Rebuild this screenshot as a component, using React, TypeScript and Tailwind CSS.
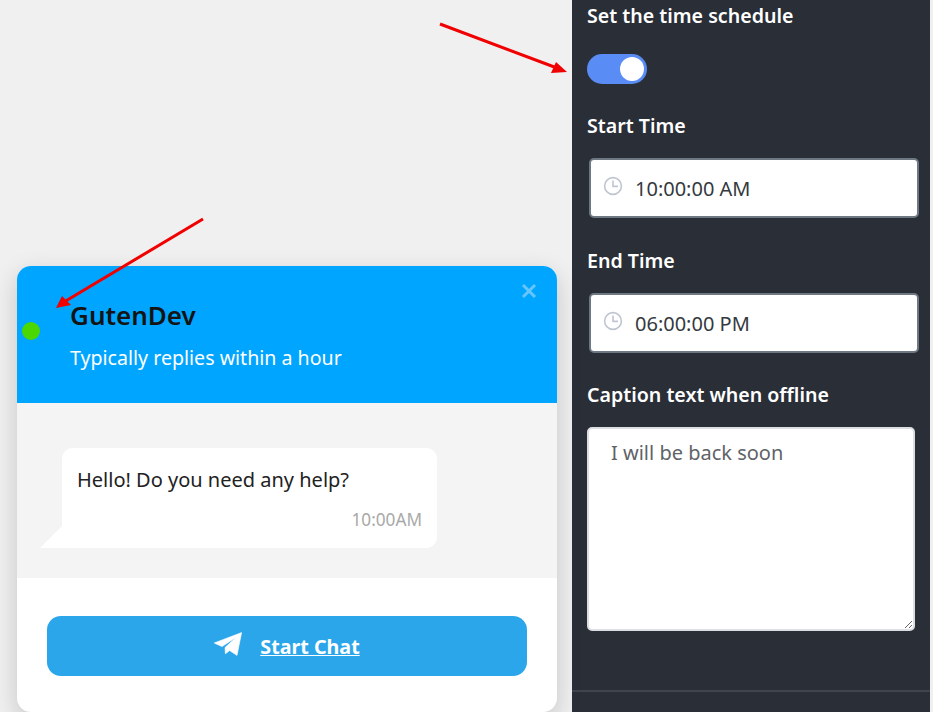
import React from "react";

function Clock() {
  return (
    <svg width="20" height="20" viewBox="0 0 20 20" fill="none" stroke="#bfc6d2" strokeWidth="1.6" className="shrink-0">
      <circle cx="10" cy="10" r="8.4" />
      <path d="M10 4.6V10.4H15" />
    </svg>
  );
}

function TimeField({ value }: { value: string }) {
  return (
    <div className="ml-[2px] flex h-[60px] w-[330px] items-center rounded-[5px] border-2 border-[#6e7883] bg-white pl-[12px]">
      <span className="-mt-[4px]">
        <Clock />
      </span>
      <span className="mt-[2px] ml-[12px] text-[20px] text-[#343a40]">{value}</span>
    </div>
  );
}

function Label({ children, className }: { children: React.ReactNode; className: string }) {
  return <div className={`text-[19.6px] leading-[27px] font-semibold text-white ${className}`}>{children}</div>;
}

export default function App() {
  return (
    <div className="relative flex h-[712px] w-[933px] overflow-hidden bg-[#f0f0f0] font-['Noto_Sans','Open_Sans',sans-serif]">
      <div className="w-[572px] shrink-0 pt-[266px] pl-[17px]">
        <div className="relative w-[540px] overflow-hidden rounded-[14px] bg-white shadow-[0_8px_24px_rgba(0,0,0,0.18)]">
          <div className="relative h-[137px] bg-[#00a5ff] pt-[31px] pl-[53px]">
            <div className="text-[26px] leading-[36px] font-semibold text-[#141414]">GutenDev</div>
            <div className="mt-[11px] text-[19.6px] leading-[28px] text-white">Typically replies within a hour</div>
            <svg className="absolute top-[17px] right-[20px]" width="16" height="16" viewBox="0 0 16 16" stroke="#66c5fb" strokeWidth="3">
              <path d="M2 2L14 14M14 2L2 14" />
            </svg>
          </div>
          <div className="h-[175px] bg-[#f4f4f4] pt-[45px] pl-[45px]">
            <div className="relative h-[100px] w-[375px] rounded-[11px] rounded-bl-none bg-white px-[15px] pt-[18px]">
              <div className="text-[20px] leading-[28px] text-[#222222]">Hello! Do you need any help?</div>
              <div className="mt-[14px] text-right text-[17.2px] leading-[24px] text-[#a9a9a9]">10:00AM</div>
              <div className="absolute bottom-0 -left-[22px] h-0 w-0 border-b-[22px] border-l-[22px] border-b-white border-l-transparent" />
            </div>
          </div>
          <div className="h-[134px] px-[30px] pt-[38px]">
            <div className="flex h-[60px] items-center justify-center rounded-[14px] bg-[#2ca6ea]">
              <svg className="mt-[-4px]" width="28" height="24" viewBox="0 0 28 24" fill="white">
                <path d="M27.6 0.6L23 23.4L15.6 18.6L11.4 21.8L11 15.6L22 5.5L8 14.6L0.2 11Z" stroke="white" strokeWidth="0.6" strokeLinejoin="round" />
              </svg>
              <span className="mt-[1px] ml-[18px] text-[19.7px] leading-[30px] font-bold text-white underline">Start Chat</span>
            </div>
          </div>
        </div>
      </div>

      <div className="h-full w-[358px] shrink-0 bg-[#2a2e37]">
        <div className="pl-[15px]">
          <Label className="pt-[2px]">Set the time schedule</Label>
          <div className="mt-[25px] flex h-[30px] w-[60px] items-center justify-end rounded-full bg-[#5a8cf5] pr-[3px]">
            <div className="h-[24px] w-[24px] rounded-full bg-white" />
          </div>
          <Label className="mt-[28px] mb-[19px]">Start Time</Label>
          <TimeField value="10:00:00 AM" />
          <Label className="mt-[29px] mb-[19px]">End Time</Label>
          <TimeField value="06:00:00 PM" />
          <Label className="mt-[28px] mb-[19px]">Caption text when offline</Label>
          <textarea
            readOnly
            defaultValue="I will be back soon"
            className="block h-[204px] w-[328px] rounded-[5px] border-2 border-[#dcdee3] bg-white px-[22px] py-[9px] text-[20px] leading-[30px] text-[#5f6368] outline-none"
          />
        </div>
        <div className="mt-[59px] h-[2px] bg-[#40444c]" />
      </div>

      <svg className="pointer-events-none absolute top-0 left-0" width="933" height="712" fill="none">
        <circle cx="31" cy="331" r="9" fill="#4bd800" />
        <path d="M203 219L64 302" stroke="#f00000" strokeWidth="3" />
        <path d="M56 308L62 296L71 305Z" fill="#f00000" />
        <path d="M440 24L557 68" stroke="#f00000" strokeWidth="3" />
        <path d="M567 72L551 73L556 62Z" fill="#f00000" />
      </svg>
    </div>
  );
}
